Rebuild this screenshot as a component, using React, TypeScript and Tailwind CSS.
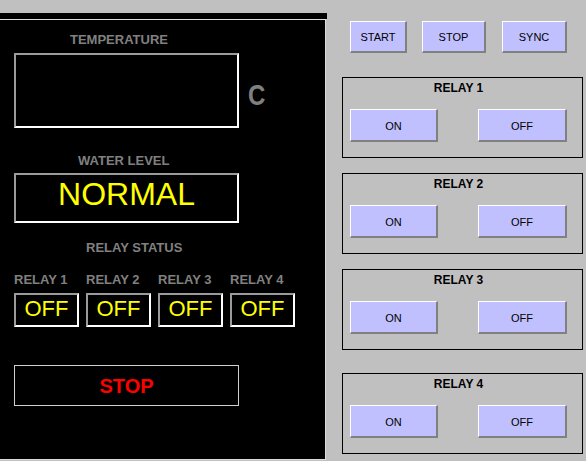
const relays = [1, 2, 3, 4];

const raised =
  "bg-[#c0c0ff] border-t border-l border-t-white border-l-white border-b-2 border-r-2 border-b-[#808080] border-r-[#808080] flex items-center justify-center pt-[2px] text-[11px] text-black";

const sunken =
  "border-2 border-t-[#9a9a9a] border-l-[#9a9a9a] border-b-white border-r-white";

const RelayGroup = ({ n, top }: { n: number; top: string }) => (
  <div className={`${top} ml-[15px] w-[241px] h-[81px] border border-black flex flex-col`}>
    <div className="pt-[4px] pr-[8px] flex justify-center text-[12px] font-bold leading-none text-black">
      RELAY {n}
    </div>
    <div className="mt-[15px] flex">
      <button className={`${raised} ml-[7px] w-[88px] h-[33px]`}>ON</button>
      <button className={`${raised} ml-[40px] w-[89px] h-[33px]`}>OFF</button>
    </div>
  </div>
);

export default function App() {
  return (
    <div className="w-[586px] h-[461px] bg-[#c0c0c0] flex overflow-hidden font-['Liberation_Sans',Arial,sans-serif]">
      {/* left display panel */}
      <div className="w-[327px] flex flex-col pt-[13px]">
        <div className="h-[6px] w-[327px] bg-black" />
        <div className="w-[326px] h-[441px] bg-black border-t border-r border-b border-[#dcdcdc] flex flex-col">
          <div className="mt-[13px] ml-[70px] text-[13px] font-bold leading-none text-[#808080]">TEMPERATURE</div>

          <div className="mt-[7px] flex items-start">
            <div className={`${sunken} ml-[14px] w-[225px] h-[75px]`} />
            <div className="ml-[9px] mt-[27px] text-[30px] font-bold leading-none text-[#808080] scale-x-[0.8] origin-left">C</div>
          </div>

          <div className="mt-[26px] ml-[78px] text-[13px] font-bold leading-none text-[#808080]">WATER LEVEL</div>

          <div className={`${sunken} mt-[6px] ml-[14px] w-[225px] h-[50px] flex justify-center pt-[3px]`}>
            <span className="text-[32px] leading-none text-[#ffff00]">NORMAL</span>
          </div>

          <div className="mt-[18px] ml-[86px] text-[13px] font-bold leading-none text-[#808080]">RELAY STATUS</div>

          <div className="mt-[19px] ml-[14px] flex gap-[7px]">
            {relays.map((r) => (
              <div key={r} className="w-[65px] text-[13px] font-bold leading-none text-[#808080] whitespace-nowrap">
                RELAY {r}
              </div>
            ))}
          </div>

          <div className="mt-[7px] ml-[14px] flex gap-[7px]">
            {relays.map((r) => (
              <div key={r} className={`${sunken} w-[65px] h-[34px] flex justify-center pt-[3px]`}>
                <span className="text-[22px] leading-none text-[#ffff00]">OFF</span>
              </div>
            ))}
          </div>

          <div className="mt-[38px] ml-[14px] w-[225px] h-[41px] border border-[#d0d0d0] flex items-center justify-center">
            <span className="text-[20px] font-bold leading-none text-[#ff0000]">STOP</span>
          </div>
        </div>
      </div>

      {/* right control panel */}
      <div className="flex-1 flex flex-col">
        <div className="mt-[21px] flex">
          <button className={`${raised} ml-[23px] w-[57px] h-[32px]`}>START</button>
          <button className={`${raised} ml-[15px] w-[64px] h-[32px]`}>STOP</button>
          <button className={`${raised} ml-[16px] w-[65px] h-[32px]`}>SYNC</button>
        </div>
        <RelayGroup n={1} top="mt-[24px]" />
        <RelayGroup n={2} top="mt-[15px]" />
        <RelayGroup n={3} top="mt-[15px]" />
        <RelayGroup n={4} top="mt-[23px]" />
      </div>
    </div>
  );
}
